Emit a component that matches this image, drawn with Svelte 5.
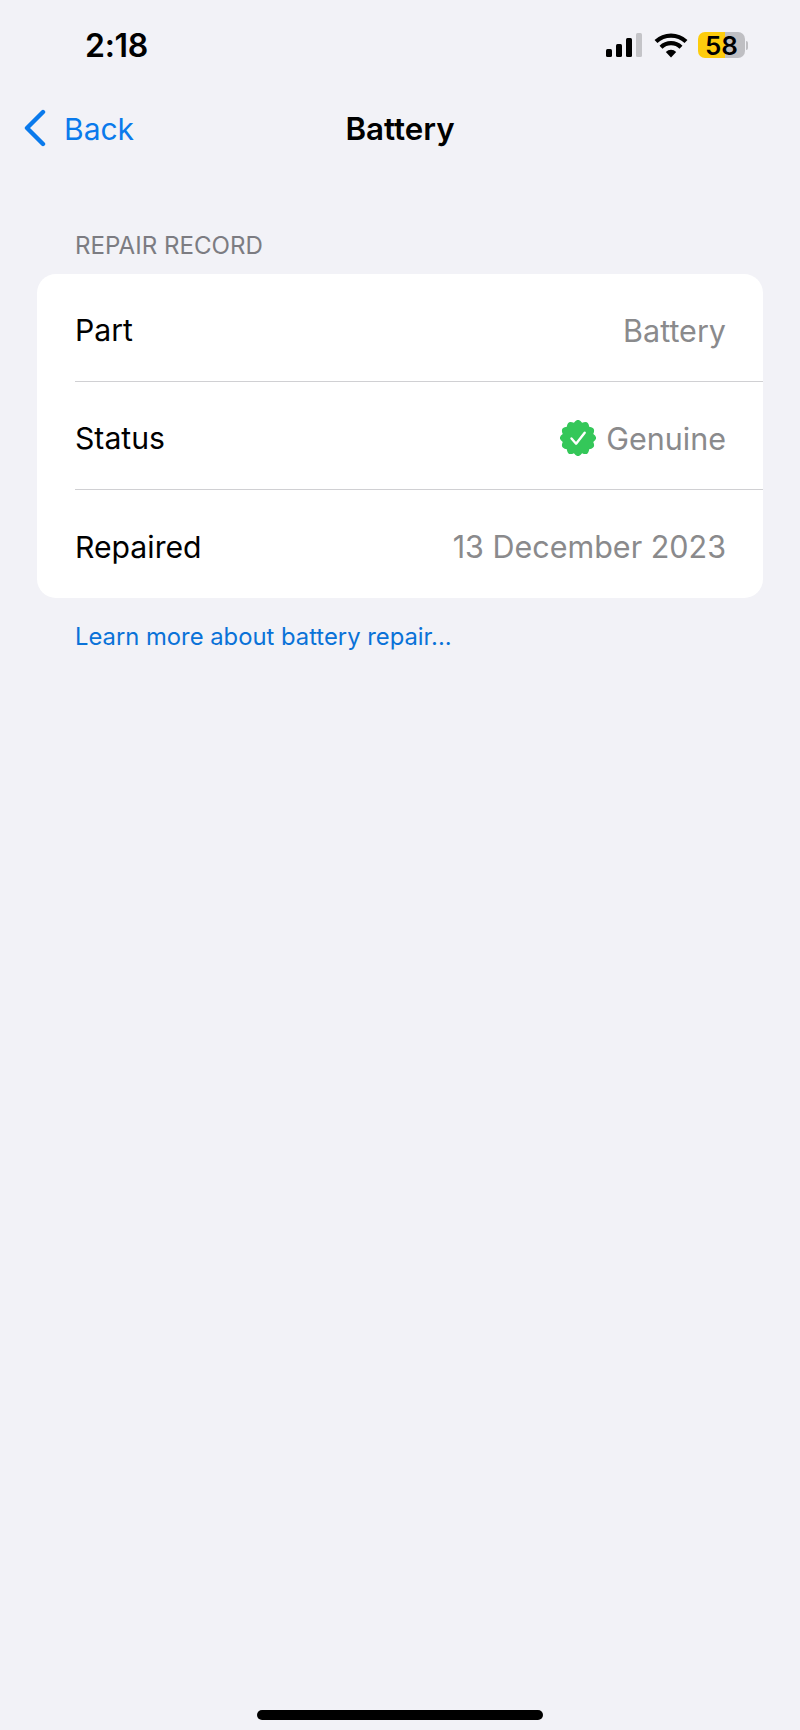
<script lang="ts">
	const rows = [
		{ label: 'Part', value: 'Battery', genuine: false },
		{ label: 'Status', value: 'Genuine', genuine: true },
		{ label: 'Repaired', value: '13 December 2023', genuine: false }
	];

	// Soft 12-lobe badge behind the status check mark, built from quadratic curves.
	const badge = (() => {
		const points = 12;
		const point = (r: number, a: number) =>
			`${(18 + r * Math.sin(a)).toFixed(2)} ${(18 - r * Math.cos(a)).toFixed(2)}`;
		let d = `M${point(15.8, -Math.PI / points)}`;
		for (let i = 0; i < points; i++) {
			const tip = (2 * Math.PI * i) / points;
			d += `Q${point(21, tip)} ${point(15.8, tip + Math.PI / points)}`;
		}
		return d + 'Z';
	})();
</script>

<div class="screen">
	<div class="status-bar">
		<span class="time">2:18</span>
		<div class="indicators">
			<div class="signal">
				<i class="bar one"></i>
				<i class="bar two"></i>
				<i class="bar three"></i>
				<i class="bar four"></i>
			</div>
			<svg class="wifi" width="34" height="25" viewBox="0 0 34 25">
				<path d="M17 24.5l-5.2-5.6a7.6 7.6 0 0 1 10.4 0z" fill="#000" />
				<path d="M7 14.2a14.4 14.4 0 0 1 20 0" fill="none" stroke="#000" stroke-width="4.2" />
				<path d="M2 8.6a21.8 21.8 0 0 1 30 0" fill="none" stroke="#000" stroke-width="4.2" />
			</svg>
			<div class="battery"><span>58</span></div>
			<i class="nub"></i>
		</div>
	</div>

	<div class="nav">
		<div class="back">
			<svg width="24" height="38" viewBox="0 0 24 38">
				<path d="M20 3L4 19l16 16" fill="none" stroke="#0a7aec" stroke-width="4.4" stroke-linecap="round" stroke-linejoin="round" />
			</svg>
			<span>Back</span>
		</div>
		<div class="title">Battery</div>
	</div>

	<div class="section-label">REPAIR RECORD</div>

	<div class="card">
		{#each rows as row}
			<div class="row">
				<span class="label">{row.label}</span>
				<span class="value">
					{#if row.genuine}
						<svg width="36" height="36" viewBox="0 0 36 36">
							<path d={badge} fill="#34c759" />
							<path d="M11.5 18.5l4.6 5.2 8.6-11" fill="none" stroke="#fff" stroke-width="2.4" stroke-linecap="round" stroke-linejoin="round" />
						</svg>
					{/if}
					{row.value}
				</span>
			</div>
		{/each}
	</div>

	<div class="learn-more">Learn more about battery repair...</div>

	<div class="spacer"></div>
	<div class="home-indicator"></div>
</div>

<style>
	:global(body) {
		margin: 0;
		background: #f2f2f7;
	}

	.screen {
		display: flex;
		flex-direction: column;
		height: 1730px;
		overflow: hidden;
		background: #f2f2f7;
		color: #000;
		font-family: Inter, 'Liberation Sans', sans-serif;
	}

	.status-bar {
		display: flex;
		justify-content: space-between;
		align-items: center;
		height: 26px;
		margin-top: 32px;
		padding: 0 52px 0 85px;
	}

	.time {
		font-size: 32px;
		font-weight: 600;
		letter-spacing: -0.3px;
	}

	.indicators {
		display: flex;
		align-items: center;
	}

	.signal {
		display: flex;
		align-items: flex-end;
		gap: 4px;
		height: 24px;
		margin-right: 12px;
	}

	.bar {
		width: 6px;
		border-radius: 1.5px;
		background: #000;
	}

	.one { height: 8px; }
	.two { height: 13px; }
	.three { height: 19px; }
	.four { height: 24px; background: #c4c4c8; }

	.wifi {
		margin-right: 10px;
	}

	.battery {
		display: flex;
		justify-content: center;
		align-items: center;
		width: 47px;
		height: 26px;
		border-radius: 7px;
		background: linear-gradient(90deg, #fdcc0d 58%, #bfbfc3 58%);
	}

	.battery span {
		font-size: 26px;
		font-weight: 600;
	}

	.nub {
		width: 2px;
		height: 9px;
		margin-left: 1px;
		border-radius: 0 2px 2px 0;
		background: #bfbfc3;
	}

	.nav {
		display: flex;
		position: relative;
		justify-content: center;
		align-items: center;
		height: 40px;
		margin-top: 52px;
	}

	.back {
		display: flex;
		position: absolute;
		top: 1px;
		left: 23px;
		align-items: center;
		gap: 17px;
		color: #0a7aec;
		font-size: 30px;
	}

	.back svg {
		margin-top: -3px;
	}

	.title {
		margin-top: -2px;
		font-size: 31.3px;
		font-weight: 600;
	}

	.section-label {
		margin: 81px 0 0 75px;
		color: #7c7c82;
		font-size: 24.1px;
		line-height: 30px;
	}

	.card {
		margin: 13px 37px 0 37px;
		border-radius: 19px;
		background: #fff;
	}

	.row {
		display: flex;
		justify-content: space-between;
		align-items: center;
		height: 108px;
		margin-left: 38px;
		padding: 5px 37px 0 0;
		border-bottom: 1px solid #d0d0d3;
		font-size: 30.2px;
		box-sizing: border-box;
	}

	.row:last-child {
		border-bottom: none;
	}

	.value {
		display: flex;
		align-items: center;
		gap: 10px;
		color: #8a8a8c;
		font-size: 30.5px;
	}

	.value svg {
		margin-top: -1px;
	}

	.learn-more {
		margin: 24px 0 0 75px;
		color: #0a72d8;
		font-size: 23.8px;
		line-height: 30px;
	}

	.spacer {
		flex: 1;
	}

	.home-indicator {
		align-self: center;
		width: 286px;
		height: 10px;
		margin-bottom: 10px;
		border-radius: 5px;
		background: #000;
	}
</style>
